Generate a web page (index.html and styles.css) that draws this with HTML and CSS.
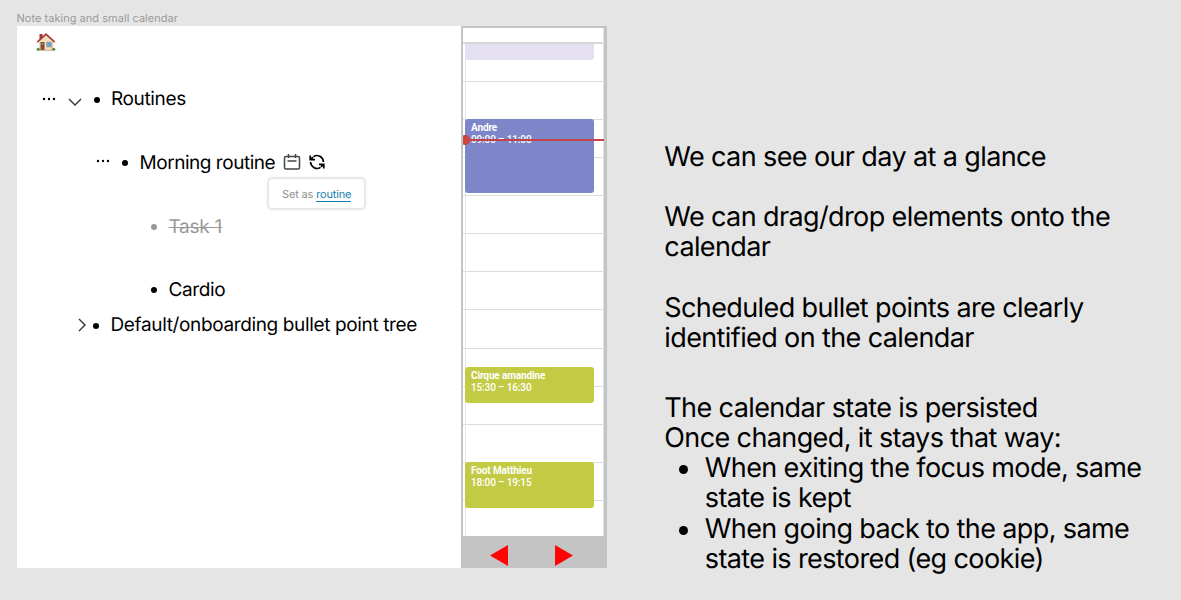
FILE: index.html
```html
<!DOCTYPE html>
<html lang="en">
<head>
<meta charset="utf-8">
<title>Note taking and small calendar</title>
<link rel="stylesheet" href="styles.css">
</head>
<body>
<main class="canvas">
  <section class="frame">
    <h1 class="frame-label">Note taking and small calendar</h1>
    <div class="board">
      <div class="notes">
        <svg class="home" viewBox="0 0 20 20" width="20" height="20">
          <path d="M3.5 2h3v5h-3z" fill="#a8322c"/>
          <path d="M3 9.5 10 2.5l7 7V18H3z" fill="#f3dfba"/>
          <path d="M15 10h2v8h-2z" fill="#e3c79a"/>
          <path d="M1.3 10.2 10 2.2l8.700 8" fill="none" stroke="#a8393a" stroke-width="1.700"/>
          <path d="M4.500 10h4v8h-4z" fill="#854a32"/>
          <path d="M5.500 11h2v2h-2z" fill="#6d899e"/>
          <path d="M10.500 10h5v5h-5z" fill="#5da5d8" stroke="#c9a77b" stroke-width=".7"/>
          <path d="M3 18.300h14" stroke="#b99572" stroke-width=".8"/>
          <circle cx="2.200" cy="17.200" r="1.500" fill="#578a3d"/>
          <circle cx="17.800" cy="17.200" r="1.500" fill="#578a3d"/>
        </svg>
        <ul class="tree">
          <li class="row row-routines">
            <svg class="dots" viewBox="0 0 14 4" width="14" height="4"><circle cx="2" cy="2" r="1.200"/><circle cx="7" cy="2" r="1.200"/><circle cx="12" cy="2" r="1.200"/></svg>
            <svg class="chevron-down" viewBox="0 0 14 9" width="14" height="9"><path d="M1 1l6 6 6-6"/></svg>
            <i class="bullet"></i><span class="t-routines">Routines</span>
          </li>
          <li class="row row-morning">
            <svg class="dots" viewBox="0 0 14 4" width="14" height="4"><circle cx="2" cy="2" r="1.200"/><circle cx="7" cy="2" r="1.200"/><circle cx="12" cy="2" r="1.200"/></svg>
            <i class="bullet"></i><span class="t-morning">Morning routine</span>
            <svg class="cal-icon" viewBox="0 0 18 18" width="18" height="18"><rect x="1.500" y="3.500" width="15" height="12.500" rx="1.500"/><path d="M5.500 1v4M12.500 1v4M4.500 8h9"/></svg>
            <svg class="sync-icon" viewBox="0 0 18 18" width="18" height="18"><path d="M5.500 3.600C9.500 1 15 3.500 15.500 9M12.500 14.400C8.500 17 3 14.500 2.500 9M2.200 2.500v4.200h4.800M15.800 15.500v-4.200h-4.800M2.700 6.300l2.300-2.200M15.300 11.700L13 13.900"/></svg>
            <div class="tooltip">Set as <a class="link">routine</a></div>
          </li>
          <li class="row row-task"><i class="bullet"></i><span class="t-task">Task 1</span></li>
          <li class="row row-cardio"><i class="bullet"></i><span class="t-cardio">Cardio</span></li>
          <li class="row row-default">
            <svg class="chevron-right" viewBox="0 0 9 14" width="9" height="14"><path d="M1 1l6 6-6 6"/></svg>
            <i class="bullet"></i><span class="t-default">Default/onboarding bullet point tree</span>
          </li>
        </ul>
      </div>
      <aside class="calendar">
        <div class="day">
          <div class="day-head"></div>
          <div class="hours">
            <div class="event event-past"></div>
            <div class="event event-andre"><b>Andre</b><span>09:00 – 11:00</span></div>
            <div class="event event-cirque"><b>Cirque amandine</b><span>15:30 – 16:30</span></div>
            <div class="event event-foot"><b>Foot Matthieu</b><span>18:00 – 19:15</span></div>
            <div class="now"></div>
          </div>
        </div>
        <div class="pager">
          <svg viewBox="0 0 18 21" width="18" height="21"><path d="M18 0v21L0 10.500z"/></svg>
          <svg viewBox="0 0 18 21" width="18" height="21"><path d="M0 0v21l18-10.500z"/></svg>
        </div>
      </aside>
    </div>
  </section>
  <section class="remarks">
    <p>We can see our day at a glance</p>
    <p>We can drag/drop elements onto the<br>calendar</p>
    <p>Scheduled bullet points are clearly<br>identified on the calendar</p>
    <p class="persist">The calendar state is persisted<br>Once changed, it stays that way:</p>
    <ul class="points">
      <li>When exiting the focus mode, same<br>state is kept</li>
      <li>When going back to the app, same<br>state is restored (eg cookie)</li>
    </ul>
  </section>
</main>
</body>
</html>
```
FILE: styles.css
```css
* { box-sizing: border-box; }
body { margin: 0; background: #e5e5e5; font-family: Inter, sans-serif; color: #000; text-rendering: geometricPrecision; }
.canvas { display: flex; width: 1181px; height: 600px; overflow: hidden; }
.frame { width: 590.5px; margin-left: 16.5px; padding-top: 11px; }
.frame-label { margin: 0; height: 15px; font-size: 11px; line-height: 15px; font-weight: 400; letter-spacing: .03px; color: #999; white-space: nowrap; }
.board { display: flex; height: 542px; background: #fff; }
.notes { width: 444.5px; }
.home { display: block; margin: 6px 0 0 19.500px; }
.tree { list-style: none; margin: 35px 0 0; padding: 0; }
.row { display: flex; align-items: center; position: relative; height: 24px; font-size: 19px; letter-spacing: -.36px; white-space: nowrap; }
.row svg { flex: none; }
.row-routines { padding-left: 25.500px; margin-bottom: 39px; }
.row-morning { padding-left: 79px; margin-bottom: 40px; }
.row-task { padding-left: 134.500px; margin-bottom: 39px; color: #999; }
.row-cardio { padding-left: 134.500px; margin-bottom: 12px; }
.row-default { padding-left: 61.500px; }
.bullet { width: 6px; height: 6px; border-radius: 50%; background: currentColor; flex: none; margin: 2px 11.500px 0 0; }
.chevron-down, .chevron-right { fill: none; stroke: #333; stroke-width: 1.4; }
.chevron-down { margin: 6px 12px 0 11.500px; }
.row-routines .bullet { margin-top: 1px; }
.t-routines, .t-default { margin-bottom: 1px; }
.t-morning { letter-spacing: -.46px; }
.t-task { letter-spacing: -.25px; text-decoration: line-through; text-decoration-thickness: 1px; }
.chevron-right { margin-right: 6px; }
.row-morning .bullet { margin-left: 12.500px; }
.dots { margin-bottom: 2px; }
.row-routines .dots { margin-bottom: 0; }
.cal-icon { fill: none; stroke: #444; stroke-width: 1.5; margin-left: 7.500px; }
.sync-icon { fill: none; stroke: #000; stroke-width: 1.7; margin-left: 7.500px; }
.tooltip { position: absolute; left: 251.500px; top: 28px; width: 97px; height: 31px; border: 1px solid #e3e3e3; border-radius: 4px; background: #fff; box-shadow: 0 0 3px #ccc; padding-left: 13px; font-size: 11px; line-height: 30px; letter-spacing: -.15px; color: #909090; }
.link { color: #1681ac; border-bottom: 1px solid #1681ac; }
.calendar { width: 146px; background: #c4c4c4; padding: 2px 3px 0 2px; }
.day { height: 508px; background: #fff; border-right: 1px solid #e4e4e4; }
.day-head { height: 16px; border-bottom: 2px solid #d8d8d8; }
.hours { position: relative; height: 492px; background: linear-gradient(90deg, transparent 2px, #e6e6e6 2px, #e6e6e6 3px, transparent 3px), repeating-linear-gradient(transparent 0 36.500px, #dcdcdc 36.500px 37.500px, transparent 37.500px 38.150px); }
.event { position: absolute; left: 2px; width: 129px; border-radius: 3px; padding: 3px 6px; color: #fff; font: 10px/12px Roboto, sans-serif; letter-spacing: -.13px; text-rendering: auto; white-space: nowrap; }
.event b, .event span { display: block; }
.event span { font-weight: 500; }
.event b { font-weight: 700; }
.event-past { top: 0; height: 16px; background: #e5e0f1; border-radius: 0 0 3px 3px; }
.event-andre { top: 75px; height: 74px; background: #7d86c9; }
.event-cirque { top: 323px; height: 36px; background: #c3cb45; }
.event-foot { top: 418px; height: 46px; background: #c3cb45; }
.now { position: absolute; left: 0; right: -1px; top: 95px; height: 2px; background: #c24448; }
.now::before { content: ""; position: absolute; left: 0; top: -4px; width: 7px; height: 10px; border-radius: 1px 5px 5px 1px; background: #cf4339; }
.pager { display: flex; justify-content: space-between; padding: 9px 31px 0 27px; fill: #fd0505; }
.remarks { padding: 141.600px 0 0 57.300px; font-size: 27px; line-height: 30.200px; letter-spacing: -.61px; white-space: nowrap; }
.remarks p { margin: 0 0 30.200px; }
.remarks .persist { margin: 39.900px 0 0; }
.points { list-style: none; margin: 0; padding: 0 0 0 40.500px; }
.points li { position: relative; }
.points li::before { content: ""; position: absolute; left: -25.500px; top: 12px; width: 9px; height: 9px; border-radius: 50%; background: #000; }
```
